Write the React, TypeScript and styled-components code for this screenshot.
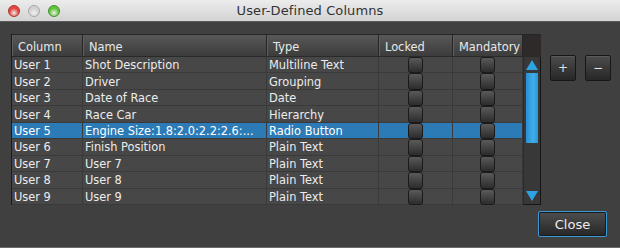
import React from "react";
import styled, { createGlobalStyle } from "styled-components";

const GlobalStyle = createGlobalStyle`
  html, body {
    margin: 0;
    padding: 0;
    background: #3a3a3a;
  }
  body {
    font-family: "DejaVu Sans", "Liberation Sans", sans-serif;
  }
`;

type Row = { col: string; name: string; type: string; selected?: boolean };

const rows: Row[] = [
  { col: "User 1", name: "Shot Description", type: "Multiline Text" },
  { col: "User 2", name: "Driver", type: "Grouping" },
  { col: "User 3", name: "Date of Race", type: "Date" },
  { col: "User 4", name: "Race Car", type: "Hierarchy" },
  {
    col: "User 5",
    name: "Engine Size:1.8:2.0:2.2:2.6:...",
    type: "Radio Button",
    selected: true,
  },
  { col: "User 6", name: "Finish Position", type: "Plain Text" },
  { col: "User 7", name: "User 7", type: "Plain Text" },
  { col: "User 8", name: "User 8", type: "Plain Text" },
  { col: "User 9", name: "User 9", type: "Plain Text" },
];

// column widths: Column, Name, Type, Locked, Mandatory
const widths = [71, 184, 112, 74, 70];

const UserDefinedColumns = () => {
  return (
    <Window>
      <GlobalStyle />
      {/* Title bar */}
      <TitleBar>
        <Lights>
          <Light $color="#e2463f" $edge="#b3302a" />
          <Light $color="#d2d2d2" $edge="#a8a8a8" />
          <Light $color="#63c23c" $edge="#3f9324" />
        </Lights>
        <Title>User-Defined Columns</Title>
      </TitleBar>

      <Body>
        <TopArea>
          <Table>
            <Main>
              <HeaderRow>
                <HeadCell $w={widths[0]}>Column</HeadCell>
                <HeadCell $w={widths[1]}>Name</HeadCell>
                <HeadCell $w={widths[2]}>Type</HeadCell>
                <HeadCell $w={widths[3]}>Locked</HeadCell>
                <HeadCell $w={widths[4]}>Mandatory</HeadCell>
              </HeaderRow>
              <Rows>
                {rows.map((r) => (
                  <BodyRow key={r.col} $selected={!!r.selected}>
                    <Cell $w={widths[0]}>{r.col}</Cell>
                    <Cell $w={widths[1]}>{r.name}</Cell>
                    <Cell $w={widths[2]}>{r.type}</Cell>
                    <CheckCell $w={widths[3]}>
                      <CheckBox />
                    </CheckCell>
                    <CheckCell $w={widths[4]}>
                      <CheckBox />
                    </CheckCell>
                  </BodyRow>
                ))}
              </Rows>
            </Main>
            <ScrollColumn>
              <Corner />
              <Track>
                <svg width="12" height="10" viewBox="0 0 12 10">
                  <polygon points="6,0 12,10 0,10" fill="#2ea3e3" />
                </svg>
                <Thumb />
                <Spacer />
                <svg width="12" height="10" viewBox="0 0 12 10">
                  <polygon points="0,0 12,0 6,10" fill="#2ea3e3" />
                </svg>
              </Track>
            </ScrollColumn>
          </Table>

          <SideButtons>
            <SquareButton>+</SquareButton>
            <SquareButton>−</SquareButton>
          </SideButtons>
        </TopArea>

        <Footer>
          <CloseButton>Close</CloseButton>
        </Footer>
      </Body>
    </Window>
  );
};

export default UserDefinedColumns;

const Window = styled.div`
  width: 620px;
  height: 248px;
  display: flex;
  flex-direction: column;
  background: #404040;
  overflow: hidden;
`;

const TitleBar = styled.div`
  position: relative;
  height: 21px;
  flex: none;
  display: flex;
  align-items: center;
  justify-content: center;
  background: linear-gradient(#ececec, #d3d3d3);
  border-bottom: 1px solid #5a5a5a;
`;

const Lights = styled.div`
  position: absolute;
  left: 8px;
  top: 5px;
  display: flex;
  gap: 8px;
`;

const Light = styled.span<{ $color: string; $edge: string }>`
  width: 12px;
  height: 12px;
  border-radius: 50%;
  box-sizing: border-box;
  border: 1px solid ${(p) => p.$edge};
  background: radial-gradient(
    circle at 50% 70%,
    #ffffff88 0%,
    ${(p) => p.$color} 55%
  );
`;

const Title = styled.div`
  font-size: 13px;
  color: #333;
  letter-spacing: 0.1px;
`;

const Body = styled.div`
  flex: 1;
  display: flex;
  flex-direction: column;
  padding: 12px 0 0 12px;
  border-bottom: 1px solid #6a6a6a;
`;

const TopArea = styled.div`
  display: flex;
  align-items: flex-start;
`;

const Table = styled.div`
  display: flex;
  border-left: 1px solid #1c1c1c;
  margin-left: -1px;
`;

const Main = styled.div`
  display: flex;
  flex-direction: column;
`;

const HeaderRow = styled.div`
  display: flex;
  height: 23px;
  box-sizing: border-box;
  border-top: 1px solid #262626;
  background: linear-gradient(#585858, #3c3c3c);
  border-bottom: 1px solid #2a2a2a;
`;

const HeadCell = styled.div<{ $w: number }>`
  width: ${(p) => p.$w}px;
  box-sizing: border-box;
  padding: 2px 0 0 5px;
  display: flex;
  align-items: center;
  font-size: 11.4px;
  color: #e8e8e8;
  border-right: 1px solid #262626;
  border-left: 1px solid #5e5e5e;
`;

const Rows = styled.div`
  display: grid;
  grid-template-rows: repeat(9, 1fr);
  height: 148px;
`;

const BodyRow = styled.div<{ $selected: boolean }>`
  display: flex;
  background: ${(p) => (p.$selected ? "#2c7bb7" : "#474747")};
  border-bottom: 1px solid #3a3a3a;
  box-sizing: border-box;
  color: ${(p) => (p.$selected ? "#ffffff" : "#ececec")};
`;

const Cell = styled.div<{ $w: number }>`
  width: ${(p) => p.$w}px;
  box-sizing: border-box;
  padding: 1px 3px 0 2px;
  display: flex;
  align-items: center;
  font-size: 11.4px;
  white-space: nowrap;
  overflow: hidden;
  border-right: 1px solid #3a3a3a;
`;

const CheckCell = styled.div<{ $w: number }>`
  width: ${(p) => p.$w}px;
  box-sizing: border-box;
  display: flex;
  align-items: stretch;
  justify-content: center;
  border-right: 1px solid #3a3a3a;
`;

const CheckBox = styled.div`
  width: 15px;
  margin-bottom: -1px;
  box-sizing: border-box;
  border: 1px solid #1a1a1a;
  border-radius: 3px;
  background: linear-gradient(#5a5a5a, #2c2c2c);
`;

const ScrollColumn = styled.div`
  display: flex;
  flex-direction: column;
  width: 18px;
`;

const Corner = styled.div`
  height: 23px;
  box-sizing: border-box;
  background: #2e2a29;
  border-top: 1px solid #262626;
`;

const Track = styled.div`
  height: 148px;
  box-sizing: border-box;
  display: flex;
  flex-direction: column;
  align-items: center;
  padding: 3px 0 3px;
  background: #383838;
  border-left: 1px solid #2a2a2a;
  border-right: 1px solid #151515;
  border-bottom: 1px solid #151515;
`;

const Thumb = styled.div`
  width: 12px;
  height: 70px;
  margin-top: 3px;
  background: linear-gradient(90deg, #2a8ed3, #3eafea 60%, #2b95d8);
`;

const Spacer = styled.div`
  flex: 1;
`;

const SideButtons = styled.div`
  display: flex;
  gap: 9px;
  margin: 21px 0 0 9px;
`;

const SquareButton = styled.button`
  width: 26px;
  height: 26px;
  padding: 0;
  border: 1px solid #171717;
  border-radius: 2px;
  background: linear-gradient(#4c4c4c, #272727);
  color: #e0e0e0;
  font-family: "DejaVu Sans", sans-serif;
  font-size: 12px;
  line-height: 22px;
  box-shadow: inset 0 1px 0 #5a5a5a;
`;

const Footer = styled.div`
  display: flex;
  justify-content: flex-end;
  padding: 6px 13px 0 0;
`;

const CloseButton = styled.button`
  width: 69px;
  height: 26px;
  padding: 0;
  border: 1px solid #3a9ad9;
  border-radius: 2px;
  background: linear-gradient(#4e4e4e, #262626);
  box-shadow: inset 0 0 0 1px #1a1a1a;
  color: #ececec;
  font-family: "DejaVu Sans", sans-serif;
  font-size: 13px;
`;
